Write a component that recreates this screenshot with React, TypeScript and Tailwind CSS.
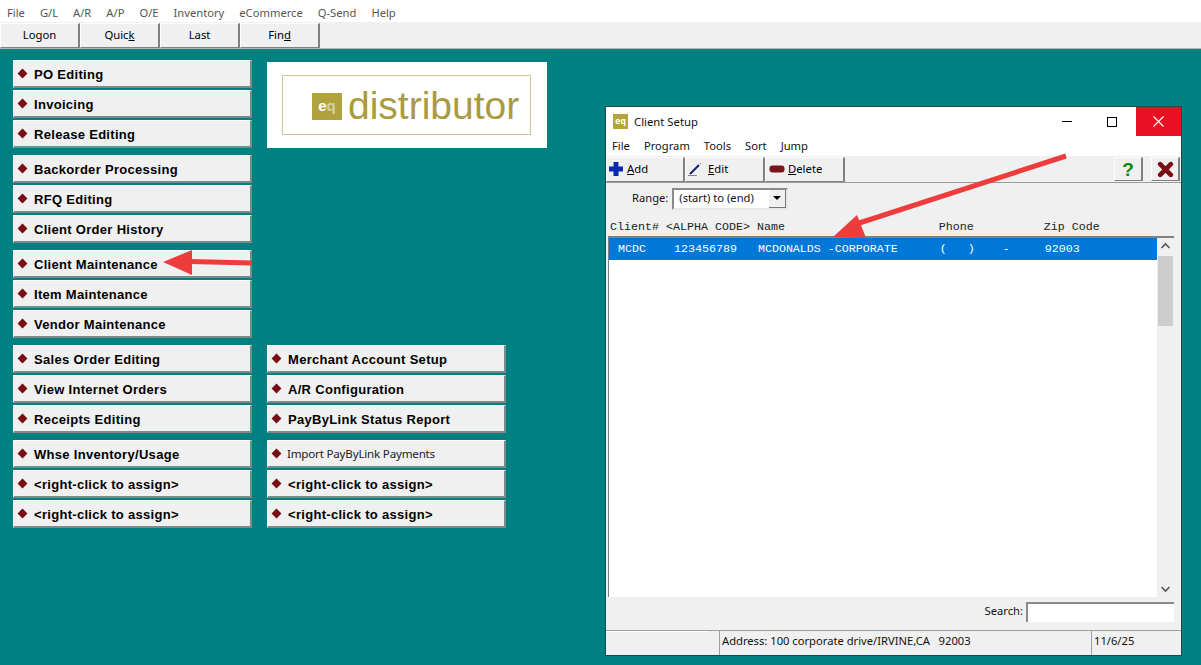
const bevel =
  "border-t border-l border-t-[#fbffff] border-l-[#fbffff] border-r-2 border-b-2 border-r-[#7b8a8a] border-b-[#7b8a8a]";

type Btn = { label: string; plain?: boolean };

function Diamond() {
  return <span className="w-[7px] h-[7px] rotate-45 bg-[#7a0c14] shrink-0" />;
}

function MenuButton({ label, plain }: Btn) {
  return (
    <div className={`h-[28px] w-[239px] bg-[#f0f0f0] flex items-center pl-[5px] ${bevel}`}>
      <Diamond />
      {plain ? (
        <span className="ml-[7px] text-[11.6px] text-[#1a1a2a] font-['Noto_Sans',sans-serif] tracking-[-0.2px] whitespace-nowrap">
          {label}
        </span>
      ) : (
        <span className="ml-[8px] pt-[1px] text-[13px] leading-none font-bold text-black font-['Liberation_Sans',sans-serif] tracking-[0.3px] whitespace-nowrap">
          {label}
        </span>
      )}
    </div>
  );
}

function Group({ items }: { items: Btn[] }) {
  return (
    <div className="flex flex-col gap-[2px]">
      {items.map((b, i) => (
        <MenuButton key={i} {...b} />
      ))}
    </div>
  );
}

function ToolButton({ children }: { children: React.ReactNode }) {
  return (
    <div className="h-[25px] w-[80px] bg-[#f0f0f0] border-t border-l border-t-white border-l-white border-r-2 border-b border-r-[#808080] border-b-[#808080] flex items-center justify-center text-[11.3px] text-black">
      {children}
    </div>
  );
}

function WinTool({ children, w }: { children: React.ReactNode; w: string }) {
  return (
    <div className={`h-[25px] ${w} bg-[#f0f0f0] border-t border-l border-t-white border-l-white border-r-2 border-b border-r-[#808080] border-b-[#808080] flex items-center pl-[1px] gap-[3px] text-[11.3px] text-black`}>
      {children}
    </div>
  );
}

function ClientWindow() {
  return (
    <div className="absolute left-[605px] top-[106px] w-[577px] h-[550px] bg-[#f0f0f0] border border-[#1c4a4a] flex flex-col font-['Noto_Sans',sans-serif] text-[11.2px] text-[#111]">
      <div className="h-[29px] bg-white flex items-start shrink-0">
        <div className="mt-[7px] ml-[7px] w-[15px] h-[15px] bg-[#b3a43c] text-white text-[9px] leading-[14px] font-bold text-center">eq</div>
        <span className="ml-[6px] mt-[6px] text-[11.3px] leading-[18px]">Client Setup</span>
        <div className="ml-auto flex">
          <div className="w-[46px] h-[29px] flex items-center justify-center">
            <span className="w-[10px] h-px bg-black" />
          </div>
          <div className="w-[46px] h-[29px] pr-[2px] flex items-center justify-center">
            <span className="w-[10px] h-[10px] border border-black" />
          </div>
          <div className="w-[45px] h-[29px] bg-[#e81123] flex items-center justify-center">
            <svg width="11" height="11" viewBox="0 0 11 11" stroke="#fff" strokeWidth="1.1">
              <path d="M0.5 0.5 L10.5 10.5 M10.5 0.5 L0.5 10.5" />
            </svg>
          </div>
        </div>
      </div>
      <div className="h-[20px] bg-white flex items-center pl-[6px] gap-[14px] pt-[1px] shrink-0">
        <span>File</span>
        <span>Program</span>
        <span>Tools</span>
        <span>Sort</span>
        <span>Jump</span>
      </div>
      <div className="h-[27px] flex items-center border-b border-[#9a9a9a] shrink-0">
        <WinTool w="w-[79px]">
          <svg width="16" height="16" viewBox="0 0 16 16" className="shrink-0">
            <path d="M5.5 1h5v4.5H15v5h-4.5V15h-5v-4.5H1v-5h4.5z" fill="#0a28b0" />
          </svg>
          <span><u>A</u>dd</span>
        </WinTool>
        <WinTool w="w-[80px]">
          <svg width="18" height="16" viewBox="0 0 18 16" className="shrink-0">
            <path d="M3 13 L12 4" stroke="#14207a" strokeWidth="2" />
            <path d="M1 14.5 H10" stroke="#888" strokeWidth="1" />
            <path d="M14 2 L13 3" stroke="#777" strokeWidth="1" />
          </svg>
          <span><u>E</u>dit</span>
        </WinTool>
        <WinTool w="w-[80px]">
          <svg width="16" height="10" viewBox="0 0 16 10" className="shrink-0 ml-[2px]">
            <rect x="0.5" y="1.5" width="15" height="7" rx="3" fill="#7a1418" />
          </svg>
          <span><u>D</u>elete</span>
        </WinTool>
        <div className="ml-auto flex gap-[8px] pr-[1px]">
          <div className="h-[24px] w-[29px] bg-[#f0f0f0] border-t border-l border-t-white border-l-white border-r-2 border-b border-r-[#808080] border-b-[#808080] flex items-center justify-center">
            <span className="text-[19px] leading-none font-bold text-[#0b8a0b] font-['Liberation_Sans',sans-serif]">?</span>
          </div>
          <div className="h-[24px] w-[29px] bg-[#f0f0f0] border-t border-l border-t-white border-l-white border-r-2 border-b border-r-[#808080] border-b-[#808080] flex items-center justify-center">
            <svg width="17" height="17" viewBox="0 0 16 16" stroke="#7a0c14" strokeWidth="4.4" strokeLinecap="round">
              <path d="M3 3 L13 13 M13 3 L3 13" />
            </svg>
          </div>
        </div>
      </div>
      <div className="h-[33px] flex items-center pl-[26px] pb-[2px] shrink-0">
        <span className="mr-[4px]">Range:</span>
        <div className="h-[22px] w-[116px] bg-white border-2 border-t-[#8a8a8a] border-l-[#8a8a8a] border-r-[#e8e8e8] border-b-[#e8e8e8] flex items-center pl-[5px]">
          <span>(start) to (end)</span>
          <div className="ml-auto h-[18px] w-[17px] bg-[#f0f0f0] border-r border-b border-[#777] flex items-center justify-center">
            <span className="w-0 h-0 border-x-[4px] border-x-transparent border-t-[4px] border-t-black" />
          </div>
        </div>
      </div>
      <div className="h-[20px] pl-[4px] pt-[4px] flex items-center font-['Liberation_Mono',monospace] text-[11.67px] whitespace-pre shrink-0 text-[#222]">
        {"Client# <ALPHA CODE> Name                      Phone          Zip Code"}
      </div>
      <div className="h-[361px] ml-[2px] mr-[7px] bg-white border-t-2 border-l border-t-[#808080] border-l-[#808080] flex shrink-0">
        <div className="flex-1 min-w-0">
          <div className="h-[22px] bg-[#0078d7] text-white pl-[9px] pt-[2px] flex items-center font-['Liberation_Mono',monospace] text-[11.67px] whitespace-pre">
            {"MCDC    123456789   MCDONALDS -CORPORATE      (   )    -     92003"}
          </div>
        </div>
        <div className="w-[17px] bg-[#f0f0f0] flex flex-col items-center shrink-0">
          <svg width="17" height="17" viewBox="0 0 17 17" fill="none" stroke="#555" strokeWidth="1.6" className="shrink-0">
            <path d="M4.5 10 L8.5 6 L12.5 10" />
          </svg>
          <div className="w-[15px] h-[70px] bg-[#cdcdcd] mt-[1px]" />
          <svg width="17" height="17" viewBox="0 0 17 17" fill="none" stroke="#555" strokeWidth="1.6" className="mt-auto shrink-0">
            <path d="M4.5 7 L8.5 11 L12.5 7" />
          </svg>
        </div>
      </div>
      <div className="flex-1 flex items-center justify-end pr-[7px] pb-[4px]">
        <span className="mr-[3px]">Search:</span>
        <div className="h-[20px] w-[148px] bg-white border-t-2 border-l-2 border-[#8a8a8a]" />
      </div>
      <div className="h-[25px] border-t border-[#a0a0a0] flex shrink-0">
        <div className="w-[102px] border-t border-white" />
        <div className="w-[11px]" />
        <div className="w-[366px] border-l border-[#a0a0a0] pl-[2px] leading-[19px] whitespace-pre">
          {"Address: 100 corporate drive/IRVINE,CA   92003"}
        </div>
        <div className="w-[6px]" />
        <div className="flex-1 border-l border-[#a0a0a0] pl-[2px] leading-[19px]">11/6/25</div>
      </div>
    </div>
  );
}

function Arrows() {
  return (
    <svg className="absolute left-0 top-0 pointer-events-none" width="1201" height="665" viewBox="0 0 1201 665">
      <path d="M252 263 L190 261.5" stroke="#ee3b3b" strokeWidth="5" fill="none" />
      <path d="M163 262 L192 250 L192 275 Z" fill="#ee3b3b" />
      <path d="M1066 156 L850 226" stroke="#ee3b3b" strokeWidth="5" fill="none" />
      <path d="M833 237 L857 215 L866 238 Z" fill="#ee3b3b" />
    </svg>
  );
}

export default function App() {
  const topMenu = ["File", "G/L", "A/R", "A/P", "O/E", "Inventory", "eCommerce", "Q-Send", "Help"];
  return (
    <div className="relative w-[1201px] h-[665px] overflow-hidden bg-[#008080] font-['Noto_Sans',sans-serif]">
      <div className="h-[22px] bg-white flex items-center pl-[7px] pt-[5px] gap-[15px] text-[11.2px] text-[#555]">
        {topMenu.map((m) => (
          <span key={m}>{m}</span>
        ))}
      </div>
      <div className="h-[27px] bg-[#f0f0f0] border-b border-[#a9bcbc] flex items-start pt-[1px]">
        <ToolButton>Logon</ToolButton>
        <ToolButton><span>Quic<u>k</u></span></ToolButton>
        <ToolButton>Last</ToolButton>
        <ToolButton><span>Fin<u>d</u></span></ToolButton>
      </div>
      <div className="flex gap-[15px] pl-[13px] pt-[11px]">
        <div className="flex flex-col gap-[7px] w-[239px]">
          <Group items={[{ label: "PO Editing" }, { label: "Invoicing" }, { label: "Release Editing" }]} />
          <Group items={[{ label: "Backorder Processing" }, { label: "RFQ Editing" }, { label: "Client Order History" }]} />
          <Group items={[{ label: "Client Maintenance" }, { label: "Item Maintenance" }, { label: "Vendor Maintenance" }]} />
          <Group items={[{ label: "Sales Order Editing" }, { label: "View Internet Orders" }, { label: "Receipts Editing" }]} />
          <Group items={[{ label: "Whse Inventory/Usage" }, { label: "<right-click to assign>" }, { label: "<right-click to assign>" }]} />
        </div>
        <div className="flex flex-col w-[280px]">
          <div className="h-[86px] w-[280px] mt-[2px] bg-white flex items-center pl-[15px]">
            <div className="w-[249px] h-[60px] border border-[#cfc68e] flex items-center pl-[29px]">
              <div className="w-[30px] h-[27px] mt-[3px] bg-[#b1a23d] text-white text-[15px] font-bold leading-[26px] text-center font-['Liberation_Sans',sans-serif]">
                e<span className="text-[#d8d2a0]">q</span>
              </div>
              <span className="ml-[6px] text-[39px] leading-none text-[#a99b40] font-['Liberation_Sans',sans-serif]">distributor</span>
            </div>
          </div>
          <div className="mt-[197px] flex flex-col gap-[7px]">
            <Group items={[{ label: "Merchant Account Setup" }, { label: "A/R Configuration" }, { label: "PayByLink Status Report" }]} />
            <Group items={[{ label: "Import PayByLink Payments", plain: true }, { label: "<right-click to assign>" }, { label: "<right-click to assign>" }]} />
          </div>
        </div>
      </div>
      <ClientWindow />
      <Arrows />
    </div>
  );
}
